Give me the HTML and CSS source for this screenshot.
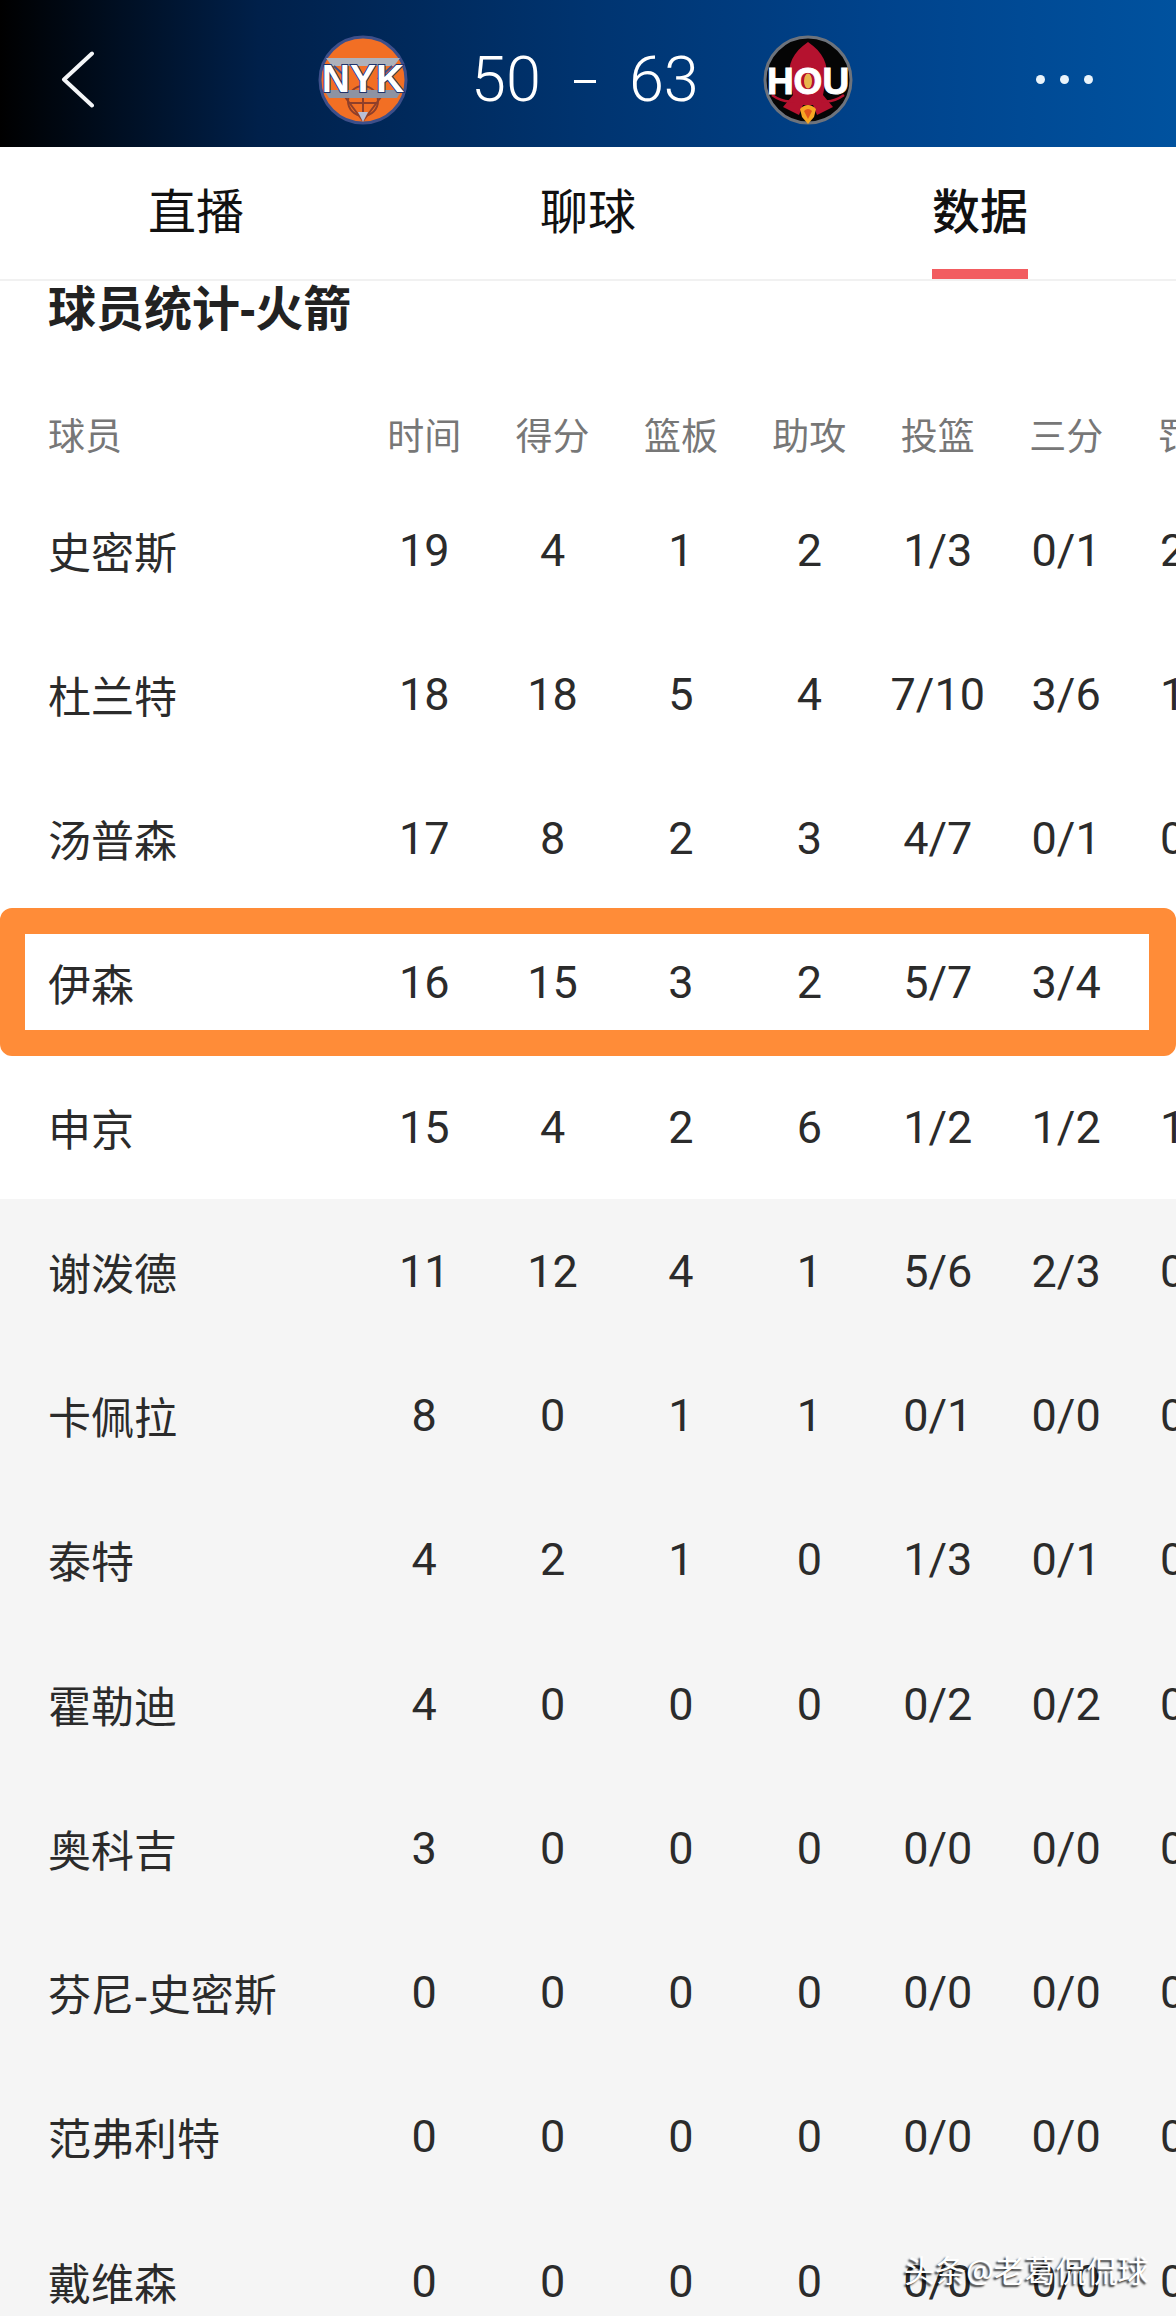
FILE: index.html
```html
<!DOCTYPE html>
<html lang="zh-CN">
<head>
<meta charset="utf-8">
<title>球员统计</title>
<link rel="stylesheet" href="styles.css">
</head>
<body>
<div class="page">
  <header class="scorebar">
    <svg class="back" viewBox="0 0 33 57" width="33" height="57"><path d="M31 2.5 L3 28.5 L31 54.5" fill="none" stroke="#f4f6f8" stroke-width="4" stroke-linecap="round" stroke-linejoin="round"/></svg>
    <div class="score">
      <svg class="logo logo-nyk" viewBox="0 0 90 90" width="90" height="90">
        <circle cx="45" cy="45" r="43" fill="#f26f24" stroke="#3d4f8a" stroke-width="3"/>
        <path d="M8 23 H82 L76 31 H14 Z" fill="#aeb2bb"/>
        <path d="M16 31 L30 44 M74 31 L60 44" stroke="#3d4f8a" stroke-width="2"/>
        <path d="M45 86 L24 58 M45 86 L66 58 M45 58 V86" stroke="#8f3f2a" stroke-width="2" fill="none"/>
        <circle cx="45" cy="66" r="15" fill="none" stroke="#8f3f2a" stroke-width="2"/>
        <path d="M30 68 H60" stroke="#8f3f2a" stroke-width="2"/>
        <path d="M40 77 H50 L45 87 Z" fill="#b9bfd6"/>
        <path d="M6 55 H84 L79 63 H11 Z" fill="#8d93a3"/>
        <text class="logo-text nyk-text" x="45" y="57">NYK</text>
      </svg>
      <span class="score-num">50</span>
      <span class="score-dash"></span>
      <span class="score-num">63</span>
      <svg class="logo logo-hou" viewBox="0 0 90 90" width="90" height="90">
        <circle cx="45" cy="45" r="43" fill="#050505" stroke="#6d737c" stroke-width="3"/>
        <path d="M45 7 C60 17 66 30 63 44 L60 60 L70 72 L54 80 L50 70 H40 L36 80 L20 72 L30 60 L27 44 C24 30 30 17 45 7 Z" fill="#b5122f"/>
        <path d="M9 60 Q20 68 31 66 M81 60 Q70 68 59 66" fill="none" stroke="#b5122f" stroke-width="2.5"/>
        <path d="M37 74 Q45 66 53 74 L51 82 L45 89 L39 82 Z" fill="#f6a623"/>
        <path d="M41 76 Q45 72 49 76 L45 84 Z" fill="#e2561c"/>
        <text class="logo-text hou-text" x="45" y="59">HOU</text>
        <ellipse cx="45" cy="46" rx="4" ry="7.5" fill="#e8b64c"/>
      </svg>
    </div>
    <div class="more"><i></i><i></i><i></i></div>
  </header>

  <nav class="tabs">
    <span class="tab">直播</span>
    <span class="tab">聊球</span>
    <span class="tab tab-active">数据</span>
  </nav>

  <main class="stats">
    <h2 class="title">球员统计-火箭</h2>
    <div class="row head"><span class="name">球员</span><span>时间</span><span>得分</span><span>篮板</span><span>助攻</span><span>投篮</span><span>三分</span><span>罚球</span></div>

    <div class="row"><span class="name">史密斯</span><span>19</span><span>4</span><span>1</span><span>2</span><span>1/3</span><span>0/1</span><span>2/2</span></div>
    <div class="row"><span class="name">杜兰特</span><span>18</span><span>18</span><span>5</span><span>4</span><span>7/10</span><span>3/6</span><span>1/1</span></div>
    <div class="row"><span class="name">汤普森</span><span>17</span><span>8</span><span>2</span><span>3</span><span>4/7</span><span>0/1</span><span>0/0</span></div>
    <div class="row row-marked"><span class="name">伊森</span><span>16</span><span>15</span><span>3</span><span>2</span><span>5/7</span><span>3/4</span><span>2/2</span></div>
    <div class="row"><span class="name">申京</span><span>15</span><span>4</span><span>2</span><span>6</span><span>1/2</span><span>1/2</span><span>1/2</span></div>

    <div class="bench">
      <div class="row"><span class="name">谢泼德</span><span>11</span><span>12</span><span>4</span><span>1</span><span>5/6</span><span>2/3</span><span>0/0</span></div>
      <div class="row"><span class="name">卡佩拉</span><span>8</span><span>0</span><span>1</span><span>1</span><span>0/1</span><span>0/0</span><span>0/0</span></div>
      <div class="row"><span class="name">泰特</span><span>4</span><span>2</span><span>1</span><span>0</span><span>1/3</span><span>0/1</span><span>0/0</span></div>
      <div class="row"><span class="name">霍勒迪</span><span>4</span><span>0</span><span>0</span><span>0</span><span>0/2</span><span>0/2</span><span>0/0</span></div>
      <div class="row"><span class="name">奥科吉</span><span>3</span><span>0</span><span>0</span><span>0</span><span>0/0</span><span>0/0</span><span>0/0</span></div>
      <div class="row"><span class="name">芬尼-史密斯</span><span>0</span><span>0</span><span>0</span><span>0</span><span>0/0</span><span>0/0</span><span>0/0</span></div>
      <div class="row"><span class="name">范弗利特</span><span>0</span><span>0</span><span>0</span><span>0</span><span>0/0</span><span>0/0</span><span>0/0</span></div>
      <div class="row"><span class="name">戴维森</span><span>0</span><span>0</span><span>0</span><span>0</span><span>0/0</span><span>0/0</span><span>0/0</span></div>
    </div>
  </main>

  <div class="watermark">头条@老葛侃侃球</div>
</div>
</body>
</html>
```
FILE: styles.css
```css
*, *::before, *::after { box-sizing: border-box; }
html, body { margin: 0; padding: 0; background: #fff; }
body { width: 1176px; height: 2316px; overflow: hidden; }
.page {
  position: relative;
  width: 1176px;
  height: 2316px;
  overflow: hidden;
  font-family: "Noto Sans", "Noto Sans CJK SC", sans-serif;
  color: #2b2b2b;
}

.scorebar {
  height: 147px;
  position: relative;
  display: flex;
  align-items: center;
  background: linear-gradient(90deg, #000 0%, #00204a 22%, #003470 50%, #00438c 75%, #00529f 100%);
  padding: 12px 0 0 61px;
  color: #fff;
}
.back { display: block; flex: none; }
.score {
  display: flex;
  align-items: center;
  margin-left: 224px;
}
.logo { display: block; flex: none; }
.score-num {
  font-family: Roboto, "Noto Sans", sans-serif;
  font-weight: 300;
  font-size: 63px;
  line-height: 70px;
  color: #fff;
}
.logo-nyk + .score-num { margin-left: 63px; }
.score-dash {
  width: 22px;
  height: 3px;
  background: #fff;
  margin: 4px 33px 0 33px;
}
.score-num + .logo { margin-left: 64px; }
.logo-text {
  font-family: "Liberation Sans", Arial, sans-serif;
  font-weight: 700;
  text-anchor: middle;
}
.nyk-text {
  font-size: 39px;
  fill: #fff;
  stroke: #20336b;
  stroke-width: 2px;
  paint-order: stroke;
}
.hou-text {
  font-size: 37px;
  fill: #fff;
  stroke: #fff;
  stroke-width: 1px;
}
.more {
  margin-left: auto;
  display: flex;
  gap: 15px;
  margin-right: 83px;
}
.more i {
  display: block;
  width: 9px;
  height: 9px;
  border-radius: 50%;
  background: #eaf4fb;
}

.tabs {
  height: 134px;
  display: grid;
  grid-template-columns: repeat(3, 1fr);
  border-bottom: 2px solid #f1f1f1;
  background: #fff;
}
.tab {
  display: flex;
  justify-content: center;
  font-size: 48px;
  line-height: 66px;
  padding-top: 31px;
  color: #111;
  position: relative;
}
.tab-active { font-weight: 500; }
.tab-active::after {
  content: "";
  position: absolute;
  left: 148px;
  width: 96px;
  bottom: 0;
  height: 10px;
  background: #f25c60;
}

.title {
  margin: 0;
  padding-left: 48px;
  font-size: 48px;
  font-weight: 700;
  line-height: 54px;
  color: #222;
}
.stats { display: block; }
.row {
  display: grid;
  grid-template-columns: 360px repeat(7, 128.4px);
  height: 144.25px;
  align-items: center;
  width: 1300px;
  font-size: 43px;
  color: #2b2b2b;
}
.row span { text-align: center; white-space: nowrap; }
.row .name { text-align: left; padding-left: 48px; }
.row span:not(.name) { font-family: Roboto, "Noto Sans", sans-serif; font-size: 45px; font-weight: 400; }
.row.head {
  height: 143px;
  padding-top: 55px;
  font-size: 37px;
  color: #777;
}
.row.head .name { font-size: 37px; }
.row.head span:not(.name) { font-family: "Noto Sans CJK SC", sans-serif; font-size: 37px; }
.bench { background: #f5f5f5; }

.row-marked { position: relative; }
.row-marked::after {
  content: "";
  position: absolute;
  left: 0;
  top: -3px;
  width: 1176px;
  height: 148px;
  border: solid #ff8c38;
  border-width: 26px 27px 26px 25px;
  border-radius: 12px;
}

.watermark {
  position: absolute;
  left: 904px;
  top: 2247px;
  font-size: 31px;
  line-height: 46px;
  white-space: nowrap;
  color: #fff;
  text-shadow: -2px 2px 2px rgba(0,0,0,.8);
}
```
